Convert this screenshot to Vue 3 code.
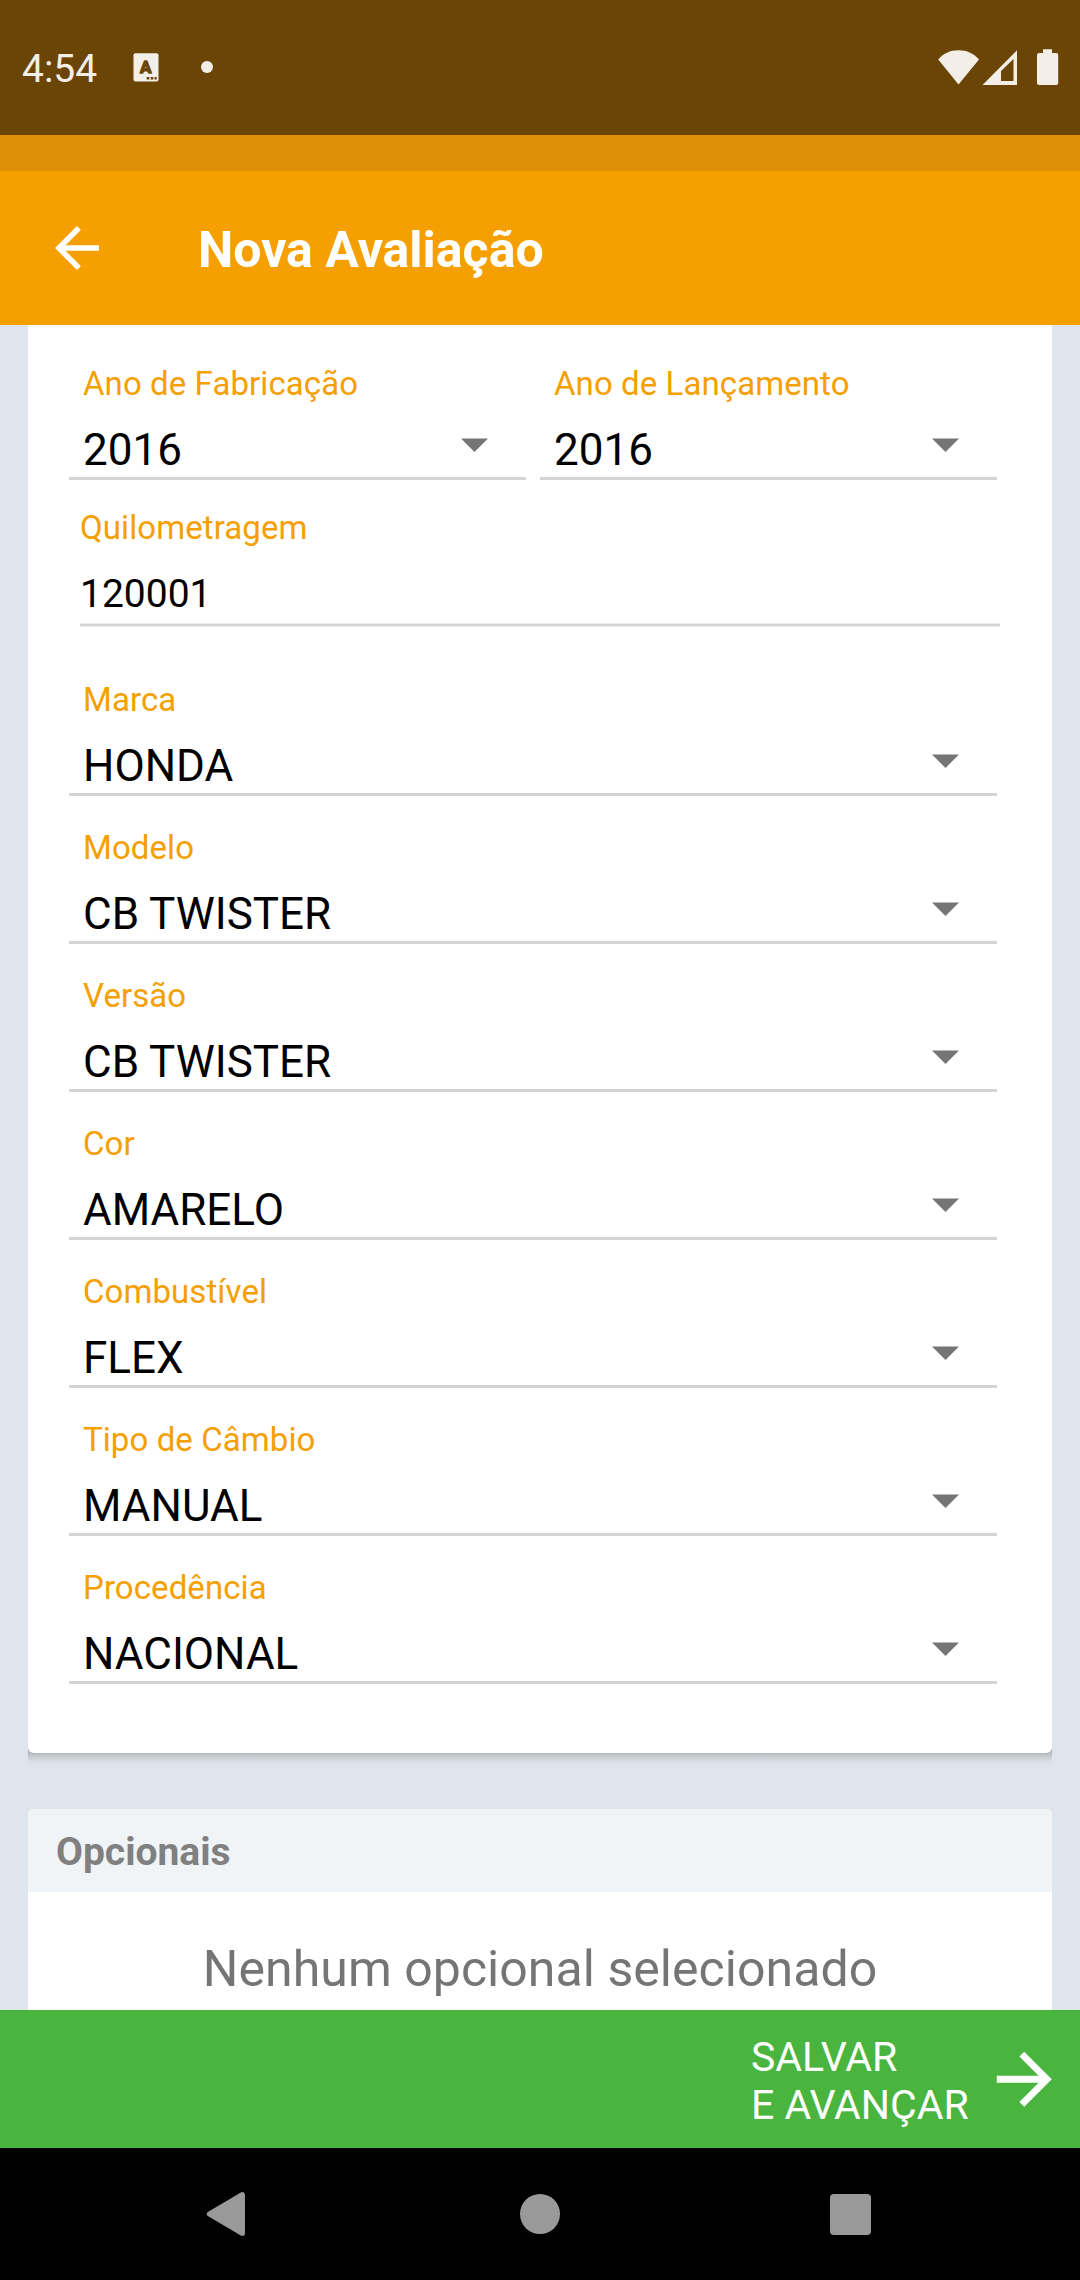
<script setup>
const years = [
  { label: 'Ano de Fabricação', value: '2016' },
  { label: 'Ano de Lançamento', value: '2016' },
]
const mileage = { label: 'Quilometragem', value: '120001' }
const fields = [
  { label: 'Marca', value: 'HONDA' },
  { label: 'Modelo', value: 'CB TWISTER' },
  { label: 'Versão', value: 'CB TWISTER' },
  { label: 'Cor', value: 'AMARELO' },
  { label: 'Combustível', value: 'FLEX' },
  { label: 'Tipo de Câmbio', value: 'MANUAL' },
  { label: 'Procedência', value: 'NACIONAL' },
]
</script>

<template>
  <div class="screen">
    <div class="status">
      <span class="time">4:54</span>
      <svg class="ime" width="26" height="29" viewBox="0 0 26 29">
        <rect x="0.5" y="0.3" width="25" height="28.2" rx="2" fill="#f3efe8" />
        <text x="12.8" y="20.3" text-anchor="middle" class="ime-letter">A</text>
        <path d="M13.7 24h2.6v2.5h-2.6zM17.7 24h2.6v2.5h-2.6zM21.5 24h2.2v2.5h-2.2z" fill="#6b4505" />
      </svg>
      <span class="dot"></span>
      <svg class="signals" width="122" height="38" viewBox="0 0 122 38">
        <g fill="#f3efe8">
          <path d="M0.2 11.5C5 5.500 12 2.200 20.500 2.200S36 5.500 41 11.500L20.500 36.500z" />
          <path fill-rule="evenodd" d="M44.500 37L79 2.300V37zM63 23v10h12.500V11z" />
          <path d="M105 1.200h9V5h4.200a2 2 0 0 1 2 2v28a2 2 0 0 1-2 2h-17.200a2 2 0 0 1-2-2V7a2 2 0 0 1 2-2h4z" />
        </g>
      </svg>
    </div>
    <div class="strip"></div>
    <header class="toolbar">
      <svg width="66" height="66" viewBox="0 0 24 24">
        <path fill="#fff" d="M20 11H7.830l5.590-5.590L12 4l-8 8 8 8 1.410-1.410L7.830 13H20v-2z" />
      </svg>
      <h1>Nova Avaliação</h1>
    </header>

    <main class="content">
      <section class="card form">
        <div class="row">
          <div v-for="f in years" :key="f.label" class="field">
            <label>{{ f.label }}</label>
            <div class="select">
              <span>{{ f.value }}</span>
              <svg width="27" height="14" viewBox="0 0 27 14"><path d="M0 0.500h27L13.500 14z" fill="#757575" /></svg>
            </div>
          </div>
        </div>
        <div class="input-field">
          <label>{{ mileage.label }}</label>
          <div class="input">{{ mileage.value }}</div>
          <div class="underline"></div>
        </div>
        <div v-for="f in fields" :key="f.label" class="field">
          <label>{{ f.label }}</label>
          <div class="select">
            <span>{{ f.value }}</span>
            <svg width="27" height="14" viewBox="0 0 27 14"><path d="M0 0.500h27L13.500 14z" fill="#757575" /></svg>
          </div>
        </div>
      </section>
      <div class="card-shadow"></div>
      <section class="card options">
        <h2>Opcionais</h2>
        <p>Nenhum opcional selecionado</p>
      </section>
    </main>

    <div class="save">
      <span>SALVAR<br />E AVANÇAR</span>
      <svg width="82.500" height="82.500" viewBox="0 0 24 24">
        <path fill="#fff" d="M12 4l-1.410 1.410L16.170 11H4v2h12.170l-5.580 5.590L12 20l8-8z" />
      </svg>
    </div>

    <nav class="nav">
      <svg width="45" height="46" viewBox="0 0 45 46">
        <path d="M37.200 3.800v38.400L4.600 23z" fill="#999" stroke="#999" stroke-width="5.500" stroke-linejoin="round" />
      </svg>
      <span class="home"></span>
      <span class="recent"></span>
    </nav>
  </div>
</template>

<style>
body {
  margin: 0;
}
</style>

<style scoped>
.screen {
  width: 1080px;
  height: 2280px;
  display: flex;
  flex-direction: column;
  overflow: hidden;
  font-family: Roboto, sans-serif;
  background: #dee5ec;
}
.status {
  height: 135px;
  flex: none;
  display: flex;
  align-items: flex-start;
  box-sizing: border-box;
  padding: 48px 20px 0 22px;
  background: #6b4505;
  color: #f3efe8;
}
.time {
  width: 111px;
  font-size: 39px;
  line-height: 43px;
}
.ime {
  margin-top: 5px;
}
.ime-letter {
  font: bold 17px Roboto, sans-serif;
  fill: #6b4505;
  stroke: #6b4505;
  stroke-width: 1.400px;
  stroke-linejoin: round;
}
.dot {
  width: 12px;
  height: 12px;
  margin: 13px 0 0 42px;
  border-radius: 50%;
  background: #f3efe8;
}
.signals {
  margin-left: auto;
}
.strip {
  height: 36px;
  flex: none;
  background: #df9006;
}
.toolbar {
  height: 154px;
  flex: none;
  display: flex;
  align-items: center;
  box-sizing: border-box;
  padding-left: 44px;
  background: #f5a000;
}
.toolbar h1 {
  margin: 4px 0 0 88px;
  font-size: 50px;
  line-height: 60px;
  font-weight: 700;
  color: #fff;
}
.content {
  height: 1685px;
  flex: none;
  overflow: hidden;
  padding: 0 28px;
}
.card {
  background: #fff;
}
.form {
  position: relative;
  z-index: 1;
  box-sizing: border-box;
  height: 1428px;
  padding: 7px 55px 0 41px;
  border-radius: 0 0 6px 6px;
}
.row {
  display: flex;
  gap: 14px;
}
.row .field {
  flex: 1;
}
label {
  display: block;
  font-size: 33px;
  line-height: 40px;
  letter-spacing: 0.080px;
  color: #f5a000;
}
.field {
  box-sizing: border-box;
  height: 148px;
  padding-top: 32px;
  border-bottom: 3px solid #d4d4d4;
}
.field label {
  padding-left: 14px;
}
.select {
  display: flex;
  justify-content: space-between;
  margin-top: 20px;
  padding: 0 38.500px 0 14px;
  font-size: 44px;
  line-height: 52px;
  color: #000;
}
.select svg {
  margin-top: 14px;
}
.input-field {
  box-sizing: border-box;
  height: 168px;
  margin: 0 -3px 0 11px;
  padding-top: 28px;
}
.input {
  margin: 23px 0 6px;
  font-size: 39px;
  line-height: 46px;
  color: #000;
}
.underline {
  height: 4px;
  background: linear-gradient(#ececec 1px, #d4d4d4 1px 3px, #ececec 3px);
}
/* The shadow is cut off at the sides of the list, so it only shows under the card. */
.card-shadow {
  box-sizing: border-box;
  height: 61px;
  margin-top: -5px;
  background: linear-gradient(#b3babf 0 5px, #b9c0c5 6px, #cbd2d8 10px, #d9e0e7 14px, #dee5ec 18px);
}
.options {
  border-radius: 6px 6px 0 0;
}
.options h2 {
  margin: 0;
  padding-left: 28px;
  height: 83px;
  font-size: 39px;
  line-height: 86px;
  font-weight: 700;
  color: #808080;
  background: #f0f4f7;
  border-radius: 6px 6px 0 0;
}
.options p {
  margin: 0;
  padding-top: 47px;
  height: 100px;
  font-size: 50px;
  letter-spacing: 0.040px;
  line-height: 60px;
  text-align: center;
  color: #757575;
}
.save {
  height: 138px;
  flex: none;
  display: flex;
  align-items: center;
  justify-content: flex-end;
  box-sizing: border-box;
  padding-right: 14.500px;
  background: #49b43e;
  color: #fff;
}
.save span {
  width: 232px;
  margin-top: 3px;
  font-size: 41px;
  line-height: 48px;
  white-space: nowrap;
}
.nav {
  flex: 1;
  display: flex;
  align-items: center;
  justify-content: space-between;
  padding: 0 209px 0 205px;
  background: #000;
}
.home {
  width: 40px;
  height: 40px;
  border-radius: 50%;
  background: #999;
}
.recent {
  width: 41px;
  height: 41px;
  border-radius: 4px;
  background: #999;
}
</style>
